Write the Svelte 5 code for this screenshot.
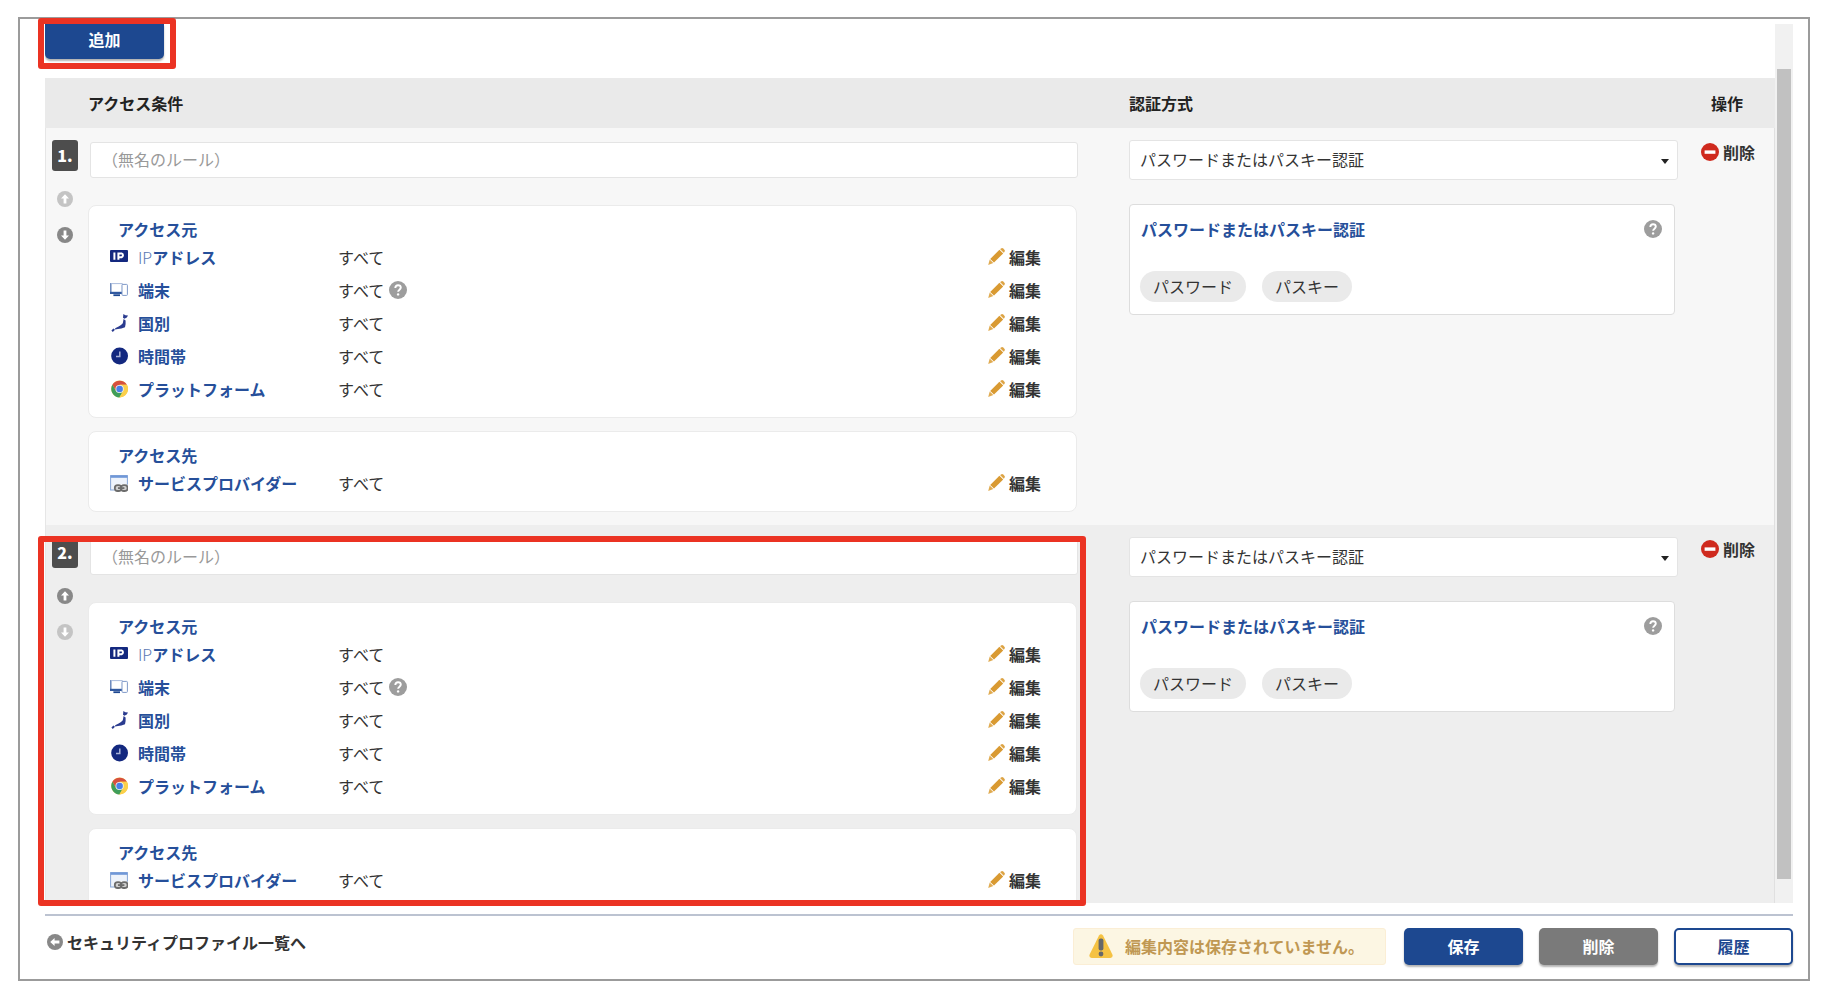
<script>
  const conditions = [
    { icon: "ip", prefix: "IP", label: "アドレス", value: "すべて" },
    { icon: "device", label: "端末", value: "すべて", help: true },
    { icon: "country", label: "国別", value: "すべて" },
    { icon: "clock", label: "時間帯", value: "すべて" },
    { icon: "chrome", label: "プラットフォーム", value: "すべて" },
  ];

  const targets = [{ icon: "provider", label: "サービスプロバイダー", value: "すべて" }];

  const groups = [
    { title: "アクセス元", items: conditions },
    { title: "アクセス先", items: targets },
  ];

  const methodName = "パスワードまたはパスキー認証";
  const factors = ["パスワード", "パスキー"];

  let rules = $state([
    { id: 1, name: "", method: methodName },
    { id: 2, name: "", method: methodName },
  ]);
</script>

{#snippet arrow(direction)}
  <svg class="arrow {direction}" viewBox="0 0 16 16" width="16" height="16" aria-hidden="true">
    <circle cx="8" cy="8" r="8" fill="currentColor" />
    <path d="M8 3.2 12 7.6H9.4V12.4H6.6V7.6H4Z" fill="#fff" />
  </svg>
{/snippet}

{#snippet help()}
  <svg class="help" viewBox="0 0 18 18" width="18" height="18" aria-hidden="true">
    <circle cx="9" cy="9" r="9" fill="#9d9d9d" />
    <path
      d="M6.3 7C6.3 5.2 7.4 4.2 9 4.2S11.8 5.2 11.8 6.6C11.8 8.6 9.1 8.7 9.1 10.8"
      fill="none"
      stroke="#fff"
      stroke-width="1.9"
    />
    <circle cx="9.1" cy="13.4" r="1.2" fill="#fff" />
  </svg>
{/snippet}

{#snippet itemIcon(name)}
  <svg class="item-icon" viewBox="0 0 18 18" width="18" height="18" aria-hidden="true">
    {#if name === "ip"}
      <rect x="0" y="2" width="18" height="12" rx="1" fill="#13287f" />
      <path
        d="M4.4 4.4V11.8M8.4 11.8V5.4H11.6A2 2 0 0 1 11.6 9.2H8.4"
        fill="none"
        stroke="#fff"
        stroke-width="2"
      />
    {:else if name === "device"}
      <path d="M0.8 2V11.6H12" fill="none" stroke="#5f7fb8" stroke-width="1.4" />
      <path d="M0.8 2.6H12.4V11" fill="none" stroke="#a9bbdc" />
      <path d="M0 10.8H12V13H0Z" fill="#3159a0" />
      <path d="M3.4 14.2H10" stroke="#1d4791" stroke-width="1.8" />
      <rect x="12" y="3.4" width="5.4" height="11" rx="0.8" fill="#fff" stroke="#7f99c8" />
    {:else if name === "country"}
      <path
        d="M13.4 0 15.4 1.2 18 1.6 16.8 3.6 14.4 4.8 13 3.8Z M13.6 5 15.6 6.6 15.6 10 15 13.2 11.4 14.4 8 15 5 15.6 5.2 14.2 8.6 12.6 11 11 12.8 9.2Z M3.4 14.6 5 15.8 2.8 18 1.4 16.4Z"
        fill="#2a3b8f"
      />
    {:else if name === "clock"}
      <circle cx="9.6" cy="9" r="8.4" fill="#13287f" />
      <path d="M9.8 4.6V9.4H6" fill="none" stroke="#a9b2d8" stroke-width="1.5" />
    {:else if name === "chrome"}
      <circle cx="9.6" cy="9" r="8.4" fill="#fbd04b" />
      <path d="M2.4 4.8A8.4 8.4 0 0 1 16.9 4.8H9.6L6 11Z" fill="#d6503f" />
      <path d="M2.4 4.8A8.4 8.4 0 0 0 9.4 17.4L13.1 11 6 11Z" fill="#3f9e5a" />
      <path d="M9.6 4.8H16.9A8.4 8.4 0 0 1 9.4 17.4L13.2 11Z" fill="#fbd04b" />
      <circle cx="9.6" cy="9" r="4.1" fill="#f4f4f4" />
      <circle cx="9.6" cy="9" r="3.3" fill="#4a7fe8" />
    {:else}
      <rect x="0.6" y="1.6" width="16.8" height="14.4" fill="#eef3fb" stroke="#86a5d6" />
      <path d="M0.6 2.6H17.4" stroke="#6f97d8" stroke-width="2.4" />
      <rect x="4" y="10" width="15" height="8" rx="4" fill="#fff" />
      <g fill="#d0d0d0" stroke="#6c6c6c" stroke-width="1.8">
        <rect x="4.8" y="11.2" width="6.6" height="5.8" rx="2.8" />
        <rect x="11" y="11.2" width="6.6" height="5.8" rx="2.8" />
        <path d="M8 14.1H14.4" />
      </g>
    {/if}
  </svg>
{/snippet}

{#snippet pencil()}
  <svg viewBox="0 0 17 17" width="17" height="17" aria-hidden="true">
    <path d="M11.4 1.8 15.2 5.4 6 14.6 2.2 11Z" fill="#d99a32" />
    <path d="M12.2 1.2 12.9 0.6Q14.2-0.4 15.3 0.6L16.4 1.7Q17.4 2.8 16.4 4L15.8 4.7Z" fill="#dda445" />
    <path d="M1.7 11.6 5.3 15 0.2 16.9Z" fill="#e0ab50" />
  </svg>
{/snippet}

<div class="page">
  <main class="frame">
    <div class="pane">
      <div class="pane-content">
        <div class="toolbar">
          <button type="button" class="add-button">追加</button>
        </div>

        <table class="rules">
          <thead>
            <tr>
              <th class="col-order"></th>
              <th>アクセス条件</th>
              <th class="col-method">認証方式</th>
              <th class="col-action">操作</th>
            </tr>
          </thead>
          <tbody>
            {#each rules as rule, i (rule.id)}
              <tr>
                <td>
                  <div class="order">
                    <span class="number">{i + 1}.</span>
                    <button type="button" class="move" aria-label="上へ" disabled={i === 0}>
                      {@render arrow("up")}
                    </button>
                    <button
                      type="button"
                      class="move"
                      aria-label="下へ"
                      disabled={i === rules.length - 1}
                    >
                      {@render arrow("down")}
                    </button>
                  </div>
                </td>
                <td class="condition">
                  <input
                    type="text"
                    class="rule-name"
                    aria-label="ルール名"
                    placeholder="（無名のルール）"
                    bind:value={rule.name}
                  />
                  {#each groups as group}
                    <section class="card">
                      <h3>{group.title}</h3>
                      {#each group.items as item}
                        <div class="item">
                          {@render itemIcon(item.icon)}
                          <span class="item-label">
                            {#if item.prefix}<span class="prefix">{item.prefix}</span>{/if}{item.label}
                          </span>
                          <span class="item-value">
                            {item.value}
                            {#if item.help}{@render help()}{/if}
                          </span>
                          <button type="button" class="text-button">
                            {@render pencil()}編集
                          </button>
                        </div>
                      {/each}
                    </section>
                  {/each}
                </td>
                <td class="method">
                  <div class="select-wrap">
                    <select aria-label="認証方式" bind:value={rule.method}>
                      <option>{methodName}</option>
                    </select>
                    <svg class="caret" viewBox="0 0 8 5" width="8" height="5" aria-hidden="true">
                      <path d="M0 0H8L4 5Z" fill="#222" />
                    </svg>
                  </div>
                  <section class="method-card">
                    <div class="method-title">
                      <h3>{rule.method}</h3>
                      {@render help()}
                    </div>
                    <div class="chips">
                      {#each factors as factor}
                        <span class="chip">{factor}</span>
                      {/each}
                    </div>
                  </section>
                </td>
                <td class="action">
                  <button type="button" class="text-button">
                    <svg viewBox="0 0 18 18" width="18" height="18" aria-hidden="true">
                      <circle cx="9" cy="9" r="9" fill="#cf2a1e" />
                      <rect x="3.6" y="7.4" width="10.8" height="3.4" fill="#fff" />
                    </svg>削除
                  </button>
                </td>
              </tr>
            {/each}
          </tbody>
        </table>
      </div>

      <div class="scrollbar"><div class="thumb"></div></div>

      <!-- 強調枠 -->
      <div class="mark mark-add"></div>
      <div class="mark mark-rule"></div>
    </div>

    <footer class="footer">
      <a href="#profiles" class="back">
        {@render arrow("left")}セキュリティプロファイル一覧へ
      </a>
      <p class="notice">
        <svg viewBox="0 0 24 24" width="24" height="24" aria-hidden="true">
          <path
            d="M10 1.6Q12 -1 14 1.6L23.4 20.4Q24.4 23.6 21.4 24H2.6Q-0.4 23.6 0.6 20.4Z"
            fill="#f5c242"
          />
          <rect x="9.6" y="4.6" width="4.8" height="11.8" rx="2" fill="#65676a" />
          <circle cx="12" cy="20" r="2.4" fill="#65676a" />
        </svg>
        編集内容は保存されていません。
      </p>
      <button type="button" class="button primary">保存</button>
      <button type="button" class="button gray">削除</button>
      <button type="button" class="button outline">履歴</button>
    </footer>
  </main>
</div>

<style>
  :global(body) {
    margin: 0;
    background: #fff;
  }

  .page {
    box-sizing: border-box;
    display: flex;
    height: 100vh;
    padding: 17px 20px 15px 18px;
    color: #333;
    font-family: "Noto Sans CJK JP", sans-serif;
    font-size: 16px;
    line-height: 24px;
  }

  .page *,
  .page *::before {
    box-sizing: border-box;
  }

  button,
  input,
  select {
    margin: 0;
    font: inherit;
    color: inherit;
  }

  h3,
  p {
    margin: 0;
    font-size: 16px;
  }

  svg {
    display: block;
    flex: none;
  }

  .frame {
    flex: 1;
    display: flex;
    flex-direction: column;
    min-width: 0;
    padding: 5px 15px 14px 25px;
    border: 2px solid #9b9b9b;
  }

  .pane {
    position: relative;
    flex: 1;
    display: flex;
    min-height: 0;
  }

  .pane-content {
    flex: 1;
    min-width: 0;
    overflow: hidden;
  }

  .toolbar {
    height: 54px;
  }

  .add-button {
    width: 119px;
    height: 35px;
    padding: 0 0 6px;
    border: 0;
    border-radius: 0 0 5px 5px;
    background: #1d4890;
    box-shadow: 0 2px 2px rgba(0, 0, 0, 0.3);
    color: #fff;
    font-weight: bold;
  }

  /* ルール一覧 */
  .rules {
    width: 100%;
    table-layout: fixed;
    border-spacing: 0;
  }

  th {
    height: 50px;
    padding: 0;
    background: #eaeaea;
    color: #222;
    text-align: left;
  }

  .col-order {
    width: 43px;
  }

  .col-method {
    width: 564px;
  }

  .col-action {
    width: 82px;
    padding-left: 18px;
  }

  td {
    padding: 14px 0 13px;
    vertical-align: top;
    background: #f7f7f7;
  }

  tbody tr:nth-child(even) td {
    background: #eee;
  }

  td:first-child {
    border-left: 1px solid #e6e6e6;
  }

  td:last-child {
    border-right: 1px solid #e0e0e0;
  }

  .order {
    display: flex;
    flex-direction: column;
    align-items: center;
    gap: 20px;
    margin-top: -2px;
    padding-right: 4px;
  }

  .number {
    padding: 0 5px;
    border-radius: 3px;
    background: #4d4d4d;
    color: #fff;
    font-size: 16px;
    font-weight: 800;
    line-height: 31px;
  }

  .move {
    padding: 0;
    border: 0;
    background: none;
    color: #888;
  }

  .move:disabled {
    color: #c4c4c4;
  }

  .down {
    transform: rotate(180deg);
  }

  .left {
    transform: rotate(-90deg);
  }

  .condition {
    padding-right: 52px;
  }

  .rule-name {
    display: block;
    width: calc(100% - 1px);
    height: 36px;
    margin: 0 0 27px 2px;
    padding: 0 12px 3px 11px;
    border: 1px solid #e4e4e4;
    border-radius: 3px;
    background: #fff;
  }

  .rule-name::placeholder {
    color: #999;
    opacity: 1;
  }

  .card {
    padding: 12px 35px 12px 21px;
    border: 1px solid #ebebeb;
    border-radius: 8px;
    background: #fff;
  }

  .card + .card {
    margin-top: 13px;
  }

  h3 {
    color: #264f9a;
    font-weight: bold;
    line-height: 22px;
  }

  .card h3 {
    padding-left: 8px;
  }

  .item {
    display: flex;
    align-items: center;
    height: 33px;
  }

  .item-label {
    width: 200px;
    margin-left: 10px;
    color: #264f9a;
    font-weight: bold;
    white-space: nowrap;
  }

  .prefix {
    color: #5877b3;
    font-weight: 300;
  }

  .item-value {
    flex: 1;
    display: flex;
    align-items: center;
    gap: 5px;
  }

  .text-button {
    display: flex;
    align-items: center;
    gap: 4px;
    padding: 0;
    border: 0;
    background: none;
    color: #333;
    font-weight: bold;
    cursor: pointer;
  }

  /* 認証方式 */
  .method {
    padding: 12px 15px 0 0;
  }

  .select-wrap {
    position: relative;
  }

  select {
    display: block;
    width: 100%;
    height: 40px;
    padding: 0 30px 3px 10px;
    border: 1px solid #e4e4e4;
    border-radius: 3px;
    background: #fff;
    appearance: none;
  }

  .caret {
    position: absolute;
    top: 19px;
    right: 9px;
    pointer-events: none;
  }

  .method-card {
    margin: 24px 3px 0 0;
    padding: 13px 12px 12px 10px;
    border: 1px solid #ddd;
    border-radius: 4px;
    background: #fff;
  }

  .method-title {
    display: flex;
    align-items: center;
    justify-content: space-between;
    padding-left: 1px;
  }

  .chips {
    display: flex;
    gap: 16px;
    margin-top: 31px;
  }

  .chip {
    padding: 0 13px;
    border-radius: 16px;
    background: #eaeaea;
    line-height: 31px;
  }

  .action {
    padding: 12px 0 0 8px;
  }

  /* スクロールバー */
  .scrollbar {
    flex: none;
    width: 18px;
    padding: 45px 2px 24px;
    background: #f1f1f1;
  }

  .thumb {
    height: 100%;
    background: #c1c1c1;
  }

  .mark {
    position: absolute;
    border: 6px solid #eb3323;
    border-radius: 3px;
    pointer-events: none;
  }

  .mark-add {
    top: -6px;
    left: -7px;
    width: 138px;
    height: 51px;
  }

  .mark-rule {
    top: 512px;
    right: 707px;
    bottom: -3px;
    left: -7px;
  }

  /* フッター */
  .footer {
    display: flex;
    align-items: flex-start;
    margin-top: 11px;
    padding-top: 12px;
    border-top: 2px solid #bcc3d1;
  }

  .back {
    display: flex;
    align-items: center;
    gap: 4px;
    margin-right: auto;
    padding-left: 2px;
    color: #333;
    font-weight: bold;
    line-height: 28px;
    text-decoration: none;
  }

  .back svg {
    color: #888;
  }

  .notice {
    display: flex;
    align-items: center;
    gap: 12px;
    height: 37px;
    margin-right: 18px;
    padding: 0 21px 2px 15px;
    border: 1px solid #fbeed5;
    border-radius: 3px;
    background: #fcf6e3;
    color: #c09853;
    font-weight: bold;
  }

  .button {
    width: 119px;
    height: 37px;
    padding: 0 0 2px;
    border: 0;
    border-radius: 5px;
    box-shadow: 0 2px 2px rgba(0, 0, 0, 0.3);
    color: #fff;
    font-weight: bold;
  }

  .button + .button {
    margin-left: 16px;
  }

  .primary {
    background: #1d4890;
  }

  .gray {
    background: #7a7a7a;
  }

  .outline {
    border: 2px solid #1d4890;
    background: #fff;
    color: #1d4890;
  }
</style>
